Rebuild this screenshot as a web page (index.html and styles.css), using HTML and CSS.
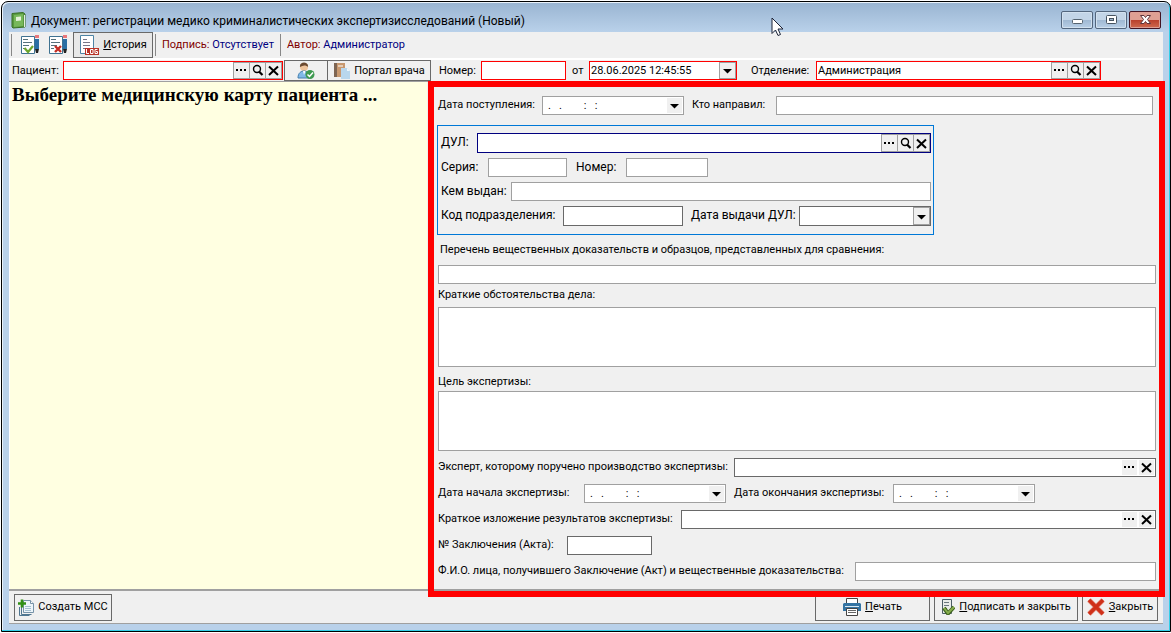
FILE: index.html
```html
<!DOCTYPE html>
<html lang="ru">
<head>
    <meta charset="UTF-8">
    <meta name="viewport" content="width=device-width, initial-scale=1.0">
    <title>Документ: регистрации медико криминалистических экспертизисследований (Новый)</title>
    <link rel="stylesheet" href="styles.css">
</head>
<body>

    <!-- shared glyphs -->
    <svg class="defs" width="0" height="0">
        <symbol id="dots" viewBox="0 0 15 15"><path d="M2 6h2v2H2zM6 6h2v2H6zM10 6h2v2h-2z"/></symbol>
        <symbol id="search" viewBox="0 0 15 15"><circle cx="7" cy="6" r="3.5" fill="none" stroke="#000" stroke-width="1.4"/><path d="M9 8.500l3.500 3.500" stroke="#000" stroke-width="2.2"/></symbol>
        <symbol id="cross" viewBox="0 0 15 15"><path d="M3 3.500l9 8.500M12 3.500L3 12" fill="none" stroke="#000" stroke-width="2"/></symbol>
        <symbol id="arrow" viewBox="0 0 15 15"><path d="M3 6h9L7.500 10.500z"/></symbol>
        <symbol id="page" viewBox="0 0 20 20"><path d="M1.500 1.500h13v17h-13z" fill="#fff" stroke="#3f7291"/><path d="M3 4.500h5M3 7.500h9M3 10.500h6M3 13.500h3" stroke="#56717c"/><path d="M15 0h4v3h-4z" fill="#e8787b"/><path d="M15 4h4v10h-4z" fill="#2a6ea4"/><path d="M15 14h4l-1 4h-2z" fill="#222"/></symbol>
    </svg>

    <div class="window">
        <header class="titlebar">
            <svg class="book" width="15" height="17" viewBox="0 0 15 17"><path d="M1 1.500L12 .5l2 1.500v13l-12 1-1-1z" fill="#58983f" stroke="#397126"/><path d="M3 3l9-1v12l-9 1z" fill="#77b85b"/><path d="M5 5l5-.5v4L5 9z" fill="#e5f3da"/><path d="M13.500 3v12" stroke="#e4eee0"/></svg>
            <h1>Документ: регистрации медико криминалистических экспертизисследований (Новый)</h1>
            <div class="window-buttons">
                <button type="button" aria-label="Свернуть"><svg width="30" height="16" viewBox="0 0 30 16"><rect x="10.500" y="7.500" width="10" height="4" rx="1" fill="#fff" stroke="#55636f"/></svg></button>
                <button type="button" aria-label="Развернуть"><svg width="30" height="16" viewBox="0 0 30 16"><rect x="10.500" y="3.500" width="10" height="8" rx="1" fill="#fff" stroke="#46535f"/><rect x="13.500" y="6.500" width="4" height="2" fill="#9ab3cb" stroke="#46535f"/></svg></button>
                <button type="button" class="close" aria-label="Закрыть окно"><svg width="30" height="16" viewBox="0 0 30 16"><path d="M10.500 3.500h3.500l1.500 2 1.500-2h3.500l-3 4 3 4H17l-1.500-2-1.500 2h-3.500l3-4z" fill="#fff" stroke="#60343a"/></svg></button>
            </div>
            <svg class="cursor" width="13" height="20" viewBox="0 0 13 20"><path d="M1 1v15.500l3.500-3.500 2.500 5.500 2.500-1-2.500-5.500h5z" fill="#fff" stroke="#1b2236"/></svg>
        </header>

        <div class="toolbar">
            <span class="sep"></span>
            <button type="button" class="tool" aria-label="Подписать">
                <svg width="20" height="20"><use href="#page"/><path d="M4.500 13l3.500 4 5-6" fill="none" stroke="#6da52c" stroke-width="2.2"/></svg>
            </button>
            <button type="button" class="tool" aria-label="Снять подпись">
                <svg width="20" height="20"><use href="#page"/><path d="M7 11l6 6M13 11l-6 6" stroke="#c42e25" stroke-width="2.4"/></svg>
            </button>
            <button type="button" class="btn history">
                <svg width="20" height="20" viewBox="0 0 20 20"><path d="M1.500.500h13v18h-13z" fill="#fff" stroke="#4d84a5"/><path d="M4 4.500h4M4 7.500h7M4 10.500h7M4 13.500h3" stroke="#778"/><path d="M6 13h14v7H6z" fill="#b93226"/><path d="M7.500 14v4.500H10M11.500 14.500h2.500v4h-2.500zM18.500 14.500H16v4h2.500v-2H17" fill="none" stroke="#fff"/></svg>
                <span><u>И</u>стория</span>
            </button>
            <span class="sep"></span>
            <p class="state">Подпись: <b>Отсутствует</b></p>
            <span class="sep"></span>
            <p class="state">Автор: <b>Администратор</b></p>
        </div>

        <div class="patient-row">
            <label for="patient" class="patient-label">Пациент:</label>
            <div class="field required patient">
                <input type="text" id="patient">
                <button type="button" aria-label="Выбрать пациента"><svg><use href="#dots"/></svg></button>
                <button type="button" aria-label="Найти пациента"><svg><use href="#search"/></svg></button>
                <button type="button" aria-label="Очистить пациента"><svg><use href="#cross"/></svg></button>
            </div>
            <button type="button" class="btn person" aria-label="Карта пациента">
                <svg width="18" height="18" viewBox="0 0 18 18"><circle cx="7" cy="5" r="4" fill="#efc49b"/><path d="M3 5c-1-6 9-6 8 0-2-2-5-2-8 0z" fill="#6b4a31"/><path d="M1 16c0-5 3-7 6-7s6 2 6 7z" fill="#81b9e8" stroke="#437faf"/><path d="M6 9l1 4 1.500-4z" fill="#fff"/><circle cx="13" cy="12.500" r="4.500" fill="#3e9a50"/><path d="M10.500 12.500l2 2 3.500-4" fill="none" stroke="#fff" stroke-width="1.500"/></svg>
            </button>
            <button type="button" class="btn portal">
                <svg width="17" height="16" viewBox="0 0 17 16"><path d="M1 0h11v14H1z" fill="#c8986f"/><path d="M1 0h3v14H1z" fill="#7d6553"/><path d="M5 2h5v2H5z" fill="#e5cdb7"/><path d="M8 5h6l3 3v8H8z" fill="#b9d7ed"/><path d="M14 5v3h3z" fill="#eef7fc"/></svg>
                <span>Портал врача</span>
            </button>
            <label for="docNumber" class="doc-label">Номер:</label>
            <input type="text" id="docNumber" class="box required doc-number">
            <label for="docDate" class="from-label">от</label>
            <div class="field required doc-date">
                <input type="text" id="docDate" value="28.06.2025 12:45:55">
                <button type="button" aria-label="Календарь"><svg><use href="#arrow"/></svg></button>
            </div>
            <label for="department" class="dep-label">Отделение:</label>
            <div class="field required department">
                <input type="text" id="department" value="Администрация">
                <button type="button" aria-label="Выбрать отделение"><svg><use href="#dots"/></svg></button>
                <button type="button" aria-label="Найти отделение"><svg><use href="#search"/></svg></button>
                <button type="button" aria-label="Очистить отделение"><svg><use href="#cross"/></svg></button>
            </div>
        </div>

        <main class="main">
            <aside class="card-pane">
                <h2>Выберите медицинскую карту пациента ...</h2>
            </aside>

            <form class="form">
                <div class="row admission">
                    <label for="admission" class="l-104">Дата поступления:</label>
                    <div class="field date">
                        <input type="text" id="admission" value=".   .        :   :">
                        <button type="button" aria-label="Календарь"><svg><use href="#arrow"/></svg></button>
                    </div>
                    <label for="sender" class="l-84">Кто направил:</label>
                    <input type="text" id="sender" class="box grow">
                </div>

                <fieldset class="identity">
                    <div class="row">
                        <label for="dul" class="l-36">ДУЛ:</label>
                        <div class="field navy grow">
                            <input type="text" id="dul">
                            <button type="button" aria-label="Выбрать ДУЛ"><svg><use href="#dots"/></svg></button>
                            <button type="button" aria-label="Найти ДУЛ"><svg><use href="#search"/></svg></button>
                            <button type="button" aria-label="Очистить ДУЛ"><svg><use href="#cross"/></svg></button>
                        </div>
                    </div>
                    <div class="row">
                        <label for="series" class="l-47">Серия:</label>
                        <input type="text" id="series" class="box series">
                        <label for="dulNumber" class="l-50">Номер:</label>
                        <input type="text" id="dulNumber" class="box dul-number">
                    </div>
                    <div class="row">
                        <label for="issuer" class="l-70">Кем выдан:</label>
                        <input type="text" id="issuer" class="box grow">
                    </div>
                    <div class="row">
                        <label for="code" class="l-122">Код подразделения:</label>
                        <input type="text" id="code" class="box dark code">
                        <label for="issueDate" class="l-107">Дата выдачи ДУЛ:</label>
                        <div class="field dark tall grow">
                            <input type="text" id="issueDate">
                            <button type="button" aria-label="Календарь"><svg><use href="#arrow"/></svg></button>
                        </div>
                    </div>
                </fieldset>

                <label for="evidence" class="caption evidence">Перечень вещественных доказательств и образцов, представленных для сравнения:</label>
                <input type="text" id="evidence" class="box">
                <label for="facts" class="caption">Краткие обстоятельства дела:</label>
                <textarea id="facts"></textarea>
                <label for="purpose" class="caption purpose">Цель экспертизы:</label>
                <textarea id="purpose"></textarea>

                <div class="details">
                    <div class="row">
                        <label for="expert" class="l-296">Эксперт, которому поручено производство экспертизы:</label>
                        <div class="field dark flat grow">
                            <input type="text" id="expert">
                            <button type="button" aria-label="Выбрать эксперта"><svg><use href="#dots"/></svg></button>
                            <button type="button" aria-label="Очистить эксперта"><svg><use href="#cross"/></svg></button>
                        </div>
                    </div>
                    <div class="row">
                        <label for="startDate" class="l-146">Дата начала экспертизы:</label>
                        <div class="field date">
                            <input type="text" id="startDate" value=".   .        :   :">
                            <button type="button" aria-label="Календарь"><svg><use href="#arrow"/></svg></button>
                        </div>
                        <label for="endDate" class="l-158">Дата окончания экспертизы:</label>
                        <div class="field date">
                            <input type="text" id="endDate" value=".   .        :   :">
                            <button type="button" aria-label="Календарь"><svg><use href="#arrow"/></svg></button>
                        </div>
                    </div>
                    <div class="row">
                        <label for="summary" class="l-243">Краткое изложение результатов экспертизы:</label>
                        <div class="field dark flat grow">
                            <input type="text" id="summary">
                            <button type="button" aria-label="Выбрать результат"><svg><use href="#dots"/></svg></button>
                            <button type="button" aria-label="Очистить результат"><svg><use href="#cross"/></svg></button>
                        </div>
                    </div>
                    <div class="row">
                        <label for="actNumber" class="l-129">№ Заключения (Акта):</label>
                        <input type="text" id="actNumber" class="box dark act-number">
                    </div>
                    <div class="row">
                        <label for="receiver" class="l-417">Ф.И.О. лица, получившего Заключение (Акт) и вещественные доказательства:</label>
                        <input type="text" id="receiver" class="box grow">
                    </div>
                </div>
                <div class="highlight"></div>
            </form>
        </main>

        <footer class="footer">
            <button type="button" class="btn create">
                <svg width="16" height="17" viewBox="0 0 16 17"><path d="M5.500 1.500h7l3 3v9h-10z" fill="#edf5fa" stroke="#7793a8"/><path d="M3.500 7v8.500h10M1.500 8v8.500h10" fill="none" stroke="#4f7690"/><path d="M7 7.500h6M7 9.500h6M7 11.500h6" stroke="#a4bfd0"/><path d="M12.500 1.500v3h3" fill="#fff" stroke="#7793a8"/><path d="M0 4.500h8M4 .5v8" stroke="#319015" stroke-width="2.6"/></svg>
                <span>Создать МСС</span>
            </button>
            <span class="grow"></span>
            <button type="button" class="btn print">
                <svg width="18" height="18" viewBox="0 0 18 18"><path d="M3.500.500h11V6h-11z" fill="#fff" stroke="#444"/><path d="M1 5h16l1 1v7H0V6z" fill="#3474a3"/><path d="M2 8.500h14" stroke="#dbe9f2"/><path d="M3.500 10.500h11v7h-11z" fill="#fff" stroke="#444"/><path d="M5 12.500h8M5 14.500h8" stroke="#666"/></svg>
                <span><u>П</u>ечать</span>
            </button>
            <button type="button" class="btn sign">
                <svg width="14" height="16" viewBox="0 0 14 16"><path d="M1.500.500h9v14h-9z" fill="#e9ece9" stroke="#4c5d65"/><path d="M3 3.500h5M3 6.500h5M3 9.500h3" stroke="#6a787e"/><path d="M3 9l4 5.500L13 8" fill="none" stroke="#3e641e" stroke-width="4"/><path d="M3 9l4 5L13 8" fill="none" stroke="#86ad4d" stroke-width="2"/></svg>
                <span><u>П</u>одписать и закрыть</span>
            </button>
            <button type="button" class="btn quit">
                <svg width="18" height="18" viewBox="0 0 18 18"><path d="M2 2l14 14M16 2L2 16" stroke="#e58b7e" stroke-width="5"/><path d="M2 2l14 14M16 2L2 16" stroke="#cf3019" stroke-width="3.500"/></svg>
                <span><u>З</u>акрыть</span>
            </button>
        </footer>
    </div>

</body>
</html>
```

FILE: styles.css
```css
* {
    box-sizing: border-box;
}
body {
    margin: 0;
    padding: 1px 0 1px 1px;
    height: 100vh;
    background: #fff;
    color: #000;
    font-family: Tahoma, Roboto, sans-serif;
    font-size: 11px;
    line-height: 14px;
}
h1, h2, p {
    margin: 0;
    font-weight: normal;
}
input, button, textarea {
    margin: 0;
    padding: 0;
    border: 0;
    border-radius: 0;
    background: #fff;
    color: #000;
    font: inherit;
}
label {
    flex: none;
    white-space: nowrap;
}
.defs {
    position: absolute;
}
.grow {
    flex: 1;
}

/* window frame */
.window {
    display: flex;
    flex-direction: column;
    height: 100%;
    padding: 1px 7px 7px;
    border: 1px solid #000;
    border-radius: 7px 7px 0 0;
    background: #b9d1ea;
    background: linear-gradient(#99b4d1, #b9d1ea 30px);
    box-shadow: inset -1px -1px #33cfe8, inset 1px 1px #eaf2fa;
}
.titlebar {
    position: relative;
    display: flex;
    align-items: center;
    flex: none;
    gap: 5px;
    height: 29px;
    padding: 6px 2px 0 2px;
}
.titlebar h1 {
    flex: 1;
    font-family: "Segoe UI", Roboto, sans-serif;
    font-size: 12px;
    line-height: 16px;
    white-space: nowrap;
}
.window-buttons {
    display: flex;
    gap: 2px;
    margin-bottom: 2px;
}
.window-buttons button {
    width: 32px;
    height: 18px;
    border: 1px solid #53667d;
    border-radius: 2px;
    background: linear-gradient(#c3d5e7 50%, #9fb8d2 50%, #b8cfe6);
    box-shadow: inset 0 0 0 1px #d2e1ef;
}
.window-buttons .close {
    border-color: #431422;
    background: linear-gradient(#dfa093 50%, #b93f2b 50%, #cf6a50);
    box-shadow: inset 0 0 0 1px #dc9e94;
}
.window-buttons svg {
    display: block;
}
.cursor {
    position: absolute;
    left: 66%;
    top: 14px;
}

/* toolbar */
.toolbar {
    display: flex;
    align-items: center;
    flex: none;
    gap: 6px;
    height: 26px;
    padding: 0 2px;
    background: #f0f0f0;
}
.sep {
    width: 1px;
    height: 22px;
    background: #888;
}
.tool {
    width: 22px;
    height: 20px;
    background: none;
    padding-left: 2px;
}
.tool svg {
    display: block;
}
.btn {
    display: flex;
    align-items: center;
    justify-content: center;
    flex: none;
    gap: 4px;
    border: 1px solid #696969;
    background: #f0f0f0;
    white-space: nowrap;
}
.history {
    width: 80px;
    height: 26px;
    margin: 0 -4px 0 -1px;
    background: #e8e8e8;
}
.state {
    color: #800000;
    white-space: nowrap;
}
.state b {
    color: #000080;
    font-weight: normal;
}

/* fields */
.box, .field {
    height: 19px;
    border: 1px solid #a0a0a0;
    background: #fff;
    min-width: 0;
}
.field {
    display: flex;
}
.field input {
    flex: 1;
    min-width: 0;
    padding-left: 1px;
}
.field button {
    flex: none;
    width: 16px;
    border: solid #a0a0a0;
    border-width: 1px 1px 1px 0;
    background: #f0f0f0;
}
.field input + button {
    width: 17px;
    border-left-width: 1px;
}
.field svg {
    display: block;
    width: 15px;
    height: 15px;
}
.field.required, .box.required {
    border-color: #f00;
}
.field.dark, .box.dark {
    border-color: #696969;
}
.field.navy {
    height: 20px;
    border-color: #000080;
}
.field.date {
    width: 142px;
}
.date input {
    padding-left: 5px;
    white-space: pre;
}
.field.date button, .field.flat button {
    border: 1px solid #fff;
}
.field.flat button {
    width: 17px;
}

.patient-row {
    display: flex;
    align-items: center;
    flex: none;
    height: 24px;
    padding: 0 3px;
    border-top: 2px solid #fff;
    border-bottom: 1px solid #a0a0a0;
    background: #f0f0f0;
}
.patient-label {
    width: 51px;
}
.patient {
    width: 220px;
    margin-right: 1px;
}
.person {
    width: 44px;
    height: 21px;
}
.portal {
    width: 104px;
    height: 21px;
    margin-left: -1px;
}
.doc-label {
    width: 50px;
    padding-left: 8px;
}
.doc-number {
    width: 85px;
}
.from-label {
    width: 23px;
    padding-left: 6px;
}
.doc-date {
    width: 148px;
}
.dep-label {
    width: 79px;
    padding-left: 14px;
}
.department {
    width: 285px;
}

/* main area */
.main {
    display: flex;
    flex: 1;
    min-height: 0;
    background: #f0f0f0;
    border-bottom: 2px solid #a0a0a0;
}
.card-pane {
    flex: none;
    width: 418px;
    padding: 2px 2px;
    border-left: 1px solid #fff;
    background: #ffffe1;
}
.card-pane h2 {
    font-family: "Times New Roman", "Liberation Serif", serif;
    font-size: 19px;
    font-weight: bold;
    line-height: 22px;
}
.form {
    position: relative;
    display: flex;
    flex-direction: column;
    flex: 1;
    min-width: 0;
    padding: 14px 7px 0 11px;
}
/* selection frame drawn over the form and the footer edge */
.highlight {
    position: absolute;
    inset: -1px -2px -8px 1px;
    border: 6px solid #f00;
    pointer-events: none;
}
.row {
    display: flex;
}
.row label {
    line-height: 18px;
}
.admission {
    padding-right: 3px;
}
.identity {
    display: flex;
    flex-direction: column;
    gap: 5px;
    width: 497px;
    min-width: 0;
    height: 110px;
    margin: 10px 0 8px -1px;
    padding: 7px 2px 7px 3px;
    border: 1px solid #0078d7;
    font-size: 12px;
}
.l-104 { width: 104px; }
.l-84 { width: 92px; padding-left: 8px; }
.l-36 { width: 36px; }
.l-47 { width: 47px; }
.l-50 { width: 59px; padding-left: 9px; }
.l-70 { width: 70px; }
.l-122 { width: 122px; }
.l-107 { width: 116px; padding-left: 8px; }
.l-296 { width: 296px; }
.l-146 { width: 146px; }
.l-158 { width: 167px; padding-left: 8px; }
.l-243 { width: 243px; }
.l-129 { width: 129px; }
.l-417 { width: 417px; }
.series {
    width: 79px;
}
.dul-number {
    width: 82px;
}
.box.code, .field.tall {
    height: 20px;
}
.code {
    width: 120px;
}
.act-number {
    width: 85px;
}
.caption {
    padding: 4px 0 5px;
}
.evidence {
    padding: 0 2px 8px;
}
.purpose {
    padding: 8px 0 2px;
}
textarea {
    height: 60px;
    border: 1px solid #a0a0a0;
    resize: none;
}
.details {
    display: flex;
    flex-direction: column;
    gap: 7px;
    padding-top: 7px;
}

/* bottom buttons */
.footer {
    display: flex;
    align-items: center;
    flex: none;
    gap: 4px;
    height: 33px;
    padding: 0 5px;
    border-bottom: 1px solid #a0a0a0;
    background: #f0f0f0;
}
.footer .btn {
    height: 27px;
}
.create {
    width: 98px;
}
.print {
    width: 115px;
}
.sign {
    width: 144px;
}
.quit {
    width: 76px;
}
```
